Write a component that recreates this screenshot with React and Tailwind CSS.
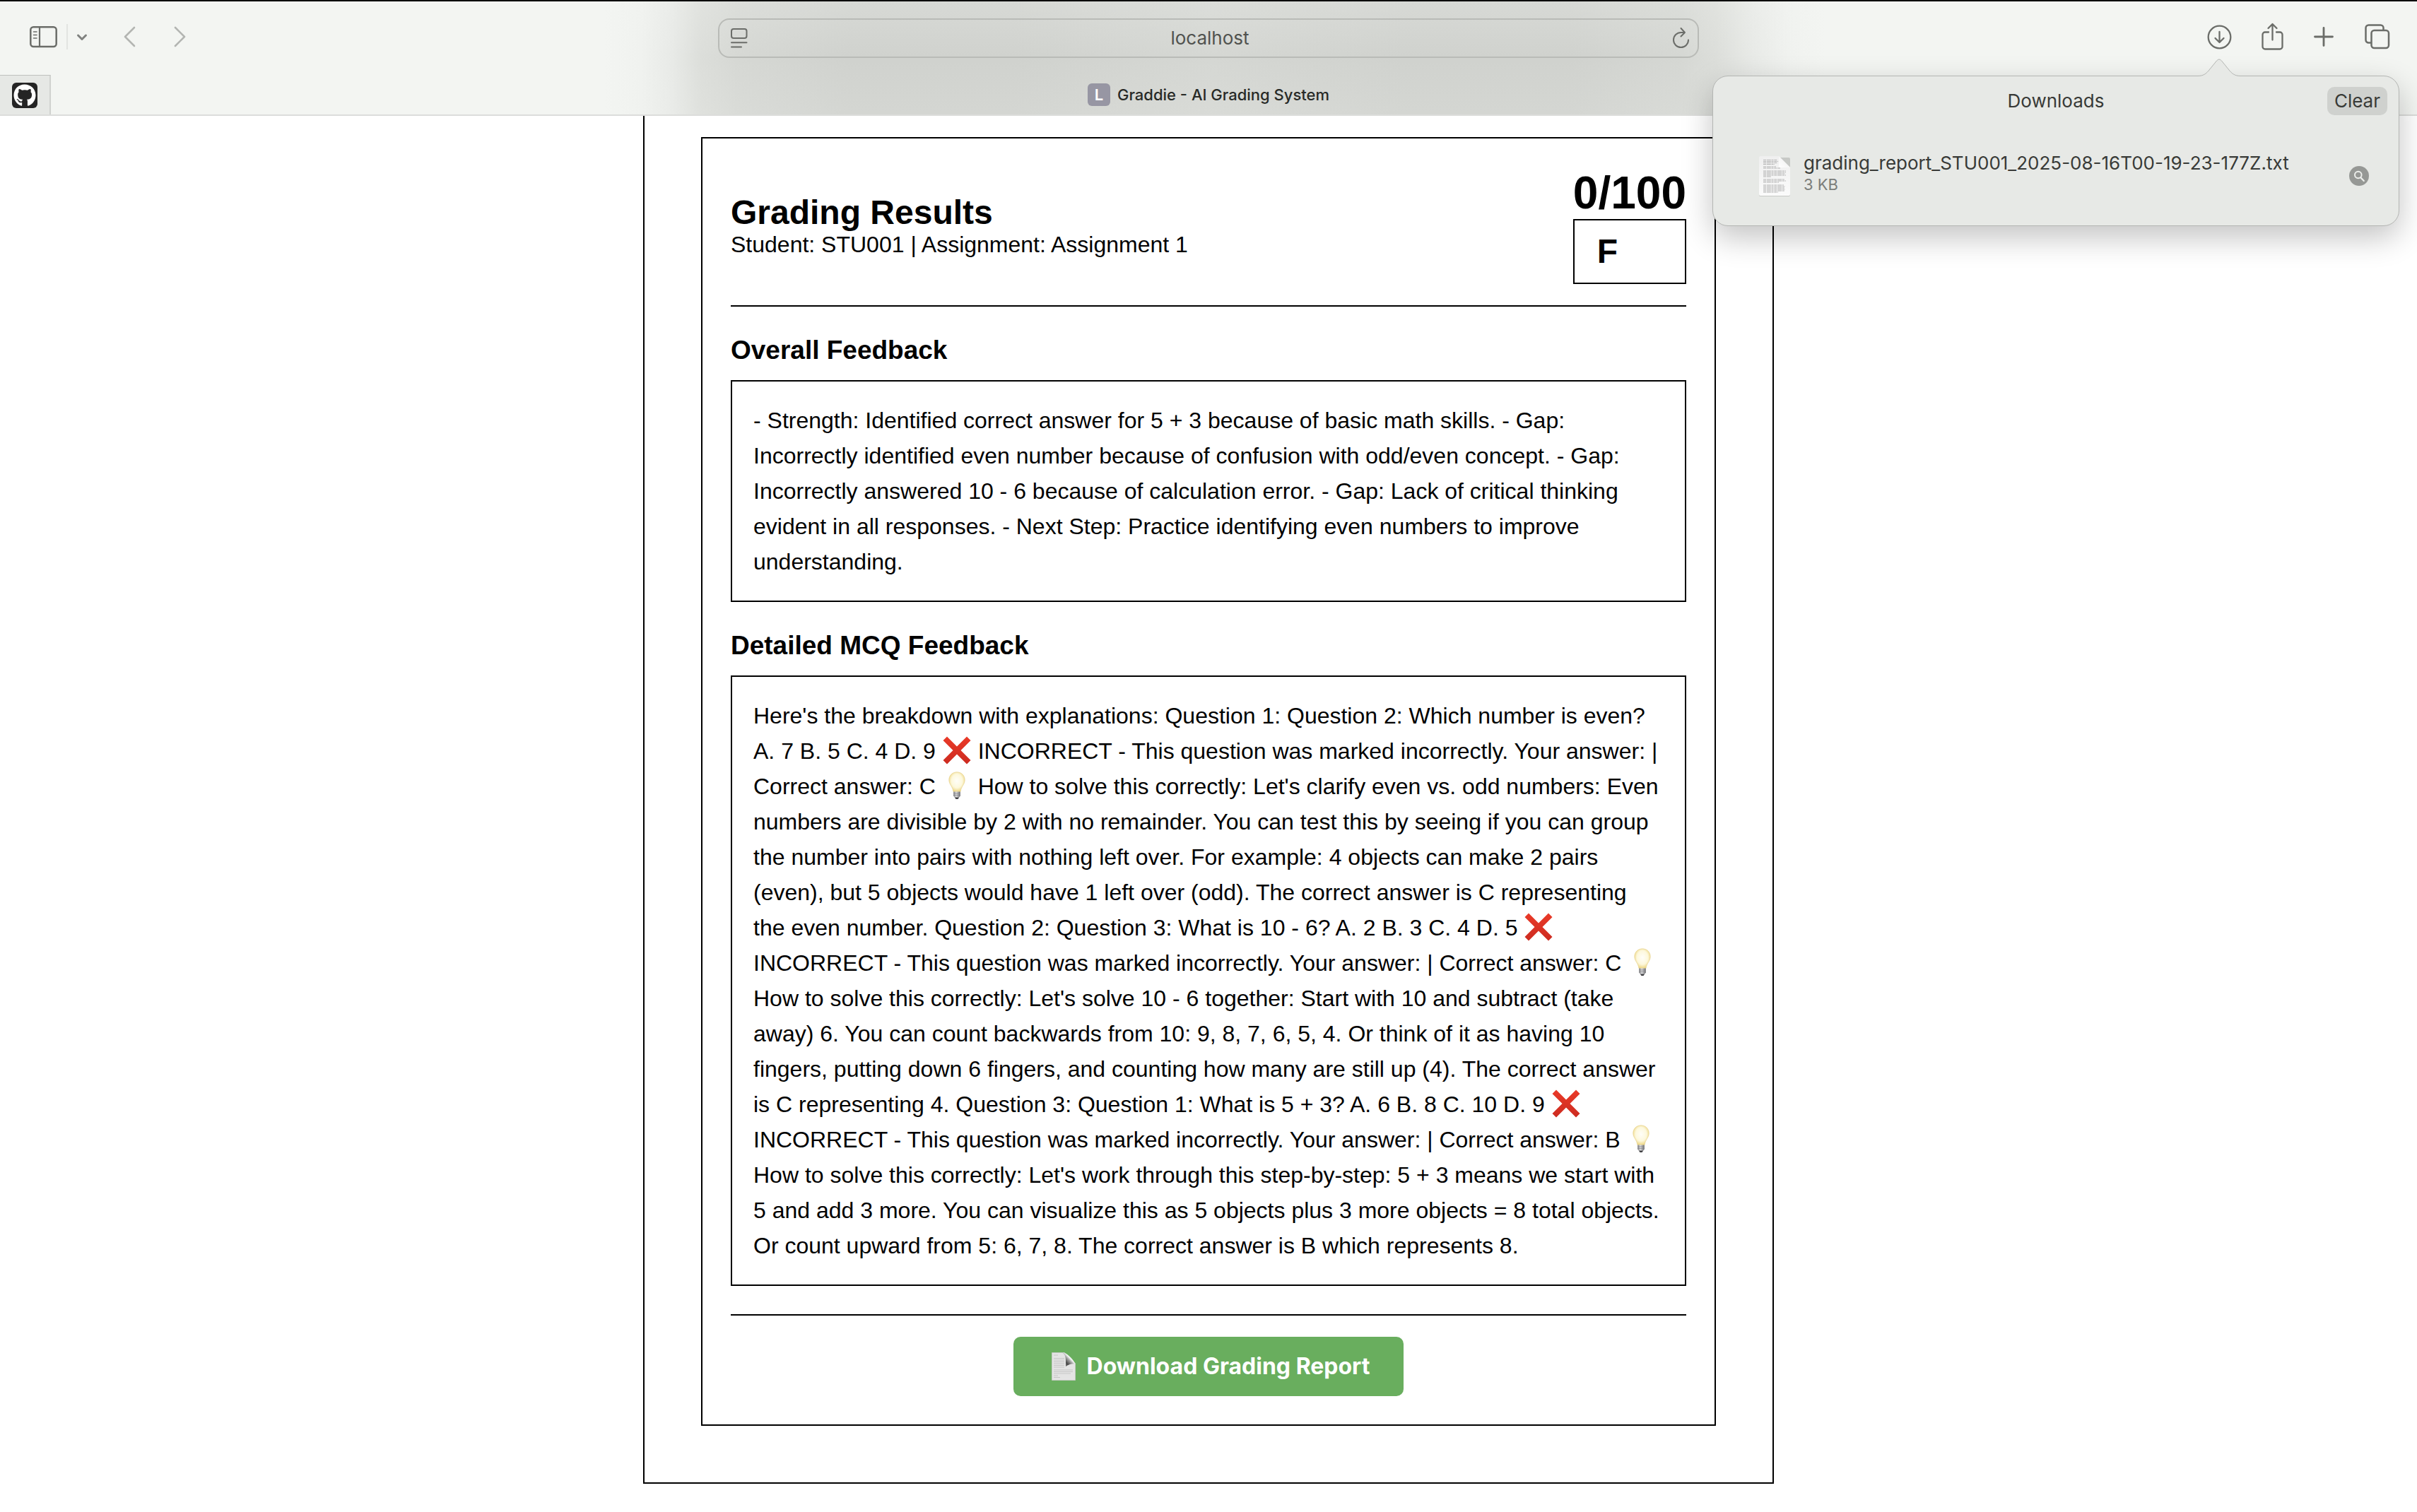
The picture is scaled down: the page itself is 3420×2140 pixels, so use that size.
import React from "react";
import { FaGithub } from "react-icons/fa";

const UI_FONT = "font-['Inter','Liberation_Sans',sans-serif]";
const PAGE_FONT = "font-['Liberation_Sans',Arial,sans-serif]";

function Cross() {
  return (
    <svg role="img" aria-label="Cross mark" viewBox="0 0 40 40" className="mx-px inline-block size-10 align-[-8px]">
      <defs>
        <linearGradient id="crossRed" x1="0" y1="0" x2="0" y2="1">
          <stop offset="0" stopColor="#ea3a28" />
          <stop offset="1" stopColor="#cc2b20" />
        </linearGradient>
      </defs>
      <path
        fill="url(#crossRed)"
        d="M6 .5 20 14.5 34 .5 39.5 6 25.5 20 39.5 34 34 39.5 20 25.5 6 39.5 .5 34 14.5 20 .5 6Z"
      />
    </svg>
  );
}

function Bulb() {
  return (
    <svg role="img" aria-label="Light bulb" viewBox="0 0 40 40" className="mx-px inline-block size-10 align-[-8px]">
      <defs>
        <radialGradient id="bulbGlass" cx="0.5" cy="0.45" r="0.58">
          <stop offset="0" stopColor="#fffef8" />
          <stop offset="0.6" stopColor="#fdf8dc" />
          <stop offset="1" stopColor="#ecd277" />
        </radialGradient>
        <linearGradient id="bulbBase" x1="0" y1="0" x2="1" y2="0">
          <stop offset="0" stopColor="#77777a" />
          <stop offset="0.4" stopColor="#dededf" />
          <stop offset="1" stopColor="#69696c" />
        </linearGradient>
      </defs>
      <path
        fill="url(#bulbGlass)"
        stroke="#e3cd84"
        strokeWidth="0.6"
        d="M20 .8c6.400 0 11.200 4.800 11.200 11 0 6.700-5 8.700-6.200 16.700H15C13.800 20.500 8.800 18.500 8.800 11.800 8.800 5.600 13.600.8 20 .8Z"
      />
      <path fill="url(#bulbBase)" d="M15.200 28.400h9.600v6.200l-1.600 1.800h-6.400l-1.600-1.800Z" />
      <path stroke="#85858a" strokeWidth="0.7" d="M15.200 31h9.600M15.200 33.500h9.600" />
      <path fill="#3f3f42" d="M16.800 36.400h6.400L21.500 39h-3Z" />
    </svg>
  );
}

function PageIcon() {
  return (
    <svg viewBox="0 0 34 48" className="h-12 w-[34px]" aria-hidden="true">
      <defs>
        <linearGradient id="curl" x1="0" y1="1" x2="1" y2="0">
          <stop offset="0" stopColor="#8e8e8e" />
          <stop offset="0.3" stopColor="#4a4a4a" />
          <stop offset="0.5" stopColor="#a8a8a8" />
          <stop offset="0.6" stopColor="#f4f4f4" />
          <stop offset="1" stopColor="#e4e4e4" />
        </linearGradient>
      </defs>
      <path fill="#e4e4e4" stroke="#c9c9c9" strokeWidth="0.8" d="M.5 4.500H18L33.500 20v23.500H.5Z" />
      <path fill="url(#curl)" d="M15 4.500c4.500 2 5.500 7 5 19.500 4-3 9-4.500 13.500-3.500V20C31 15 24 7 18 4.500Z" />
      <path
        stroke="#c6c6c6"
        strokeWidth="1"
        d="M3 8h6M3 12.500h15M3 15h15M3 17.500h15M3 20h15M3 22.500h15M3 25h15M3 29h27M3 31.500h27M3 34h24M3 37h6M3 39.500h9"
      />
    </svg>
  );
}

function TextFileIcon() {
  return (
    <svg viewBox="0 0 46 60" className="h-[60px] w-[46px] shrink-0" aria-hidden="true">
      <defs>
        <linearGradient id="sheet" x1="0" y1="0" x2="0" y2="1">
          <stop offset="0" stopColor="#efefef" />
          <stop offset="1" stopColor="#fbfbfb" />
        </linearGradient>
        <linearGradient id="fold" x1="0" y1="1" x2="1" y2="0">
          <stop offset="0" stopColor="#ffffff" />
          <stop offset="0.5" stopColor="#f6f6f6" />
          <stop offset="1" stopColor="#dcdcdc" />
        </linearGradient>
      </defs>
      <rect x="1" y="4" width="44" height="55" rx="2" fill="#b9bab8" opacity="0.7" />
      <path fill="url(#sheet)" d="M3 2h26l16 16v38a2 2 0 0 1-2 2H3a2 2 0 0 1-2-2V4a2 2 0 0 1 2-2Z" />
      <path
        stroke="#b2b2b2"
        strokeWidth="1.200"
        strokeDasharray="4 0.8 6 0.7 3 0.8"
        d="M7 7.500h20M7 9.500h21M7 11.500h20M7 13.500h16M7 17h18M7 19h24M7 23h32M7 25h32M7 27h31M7 29h32M7 31h11M7 35h30M7 37h32M7 39h22M7 43h29M7 45h31M7 47h30M7 49h31M7 51h30M7 53h21"
      />
      <path fill="url(#fold)" d="M29 2v14a2 2 0 0 0 2 2h14Z" />
    </svg>
  );
}

function Toolbar() {
  return (
    <div className="grid h-[104px] grid-cols-[1fr_minmax(0,1388px)_1fr] items-start text-[#6b6d69]">
      <div className="flex h-[104px] items-center pb-1 pl-[42px]">
        <button aria-label="Show sidebar">
          <svg viewBox="0 0 40 32" className="h-8 w-10" fill="none" stroke="currentColor">
            <rect x="1.300" y="2.300" width="36.400" height="27.800" rx="4" strokeWidth="2.500" />
            <path strokeWidth="2.200" d="M14 2v28" />
            <path strokeWidth="1.500" strokeLinecap="round" d="M5.500 9h4.500M5.500 13.500h4.500M5.500 18h4.500" />
          </svg>
        </button>
        <span className="ml-3 h-9 w-[2px] bg-[#e2e4e1]" />
        <button aria-label="Tab groups" className="ml-3">
          <svg viewBox="0 0 16 16" className="size-4" fill="none" stroke="#808280" strokeWidth="3" strokeLinecap="round" strokeLinejoin="round">
            <path d="M2.500 6 8 11.500 13.500 6" />
          </svg>
        </button>
        <button aria-label="Back" className="ml-[49px]">
          <svg viewBox="0 0 20 32" className="h-8 w-5" fill="none" stroke="#b3b5b2" strokeWidth="2.600" strokeLinecap="round" strokeLinejoin="round">
            <path d="M17 3 4 16 17 29" />
          </svg>
        </button>
        <button aria-label="Forward" className="ml-[52px]">
          <svg viewBox="0 0 20 32" className="h-8 w-5" fill="none" stroke="#b3b5b2" strokeWidth="2.600" strokeLinecap="round" strokeLinejoin="round">
            <path d="M3 3 16 16 3 29" />
          </svg>
        </button>
      </div>

      <div className="mt-6 flex h-14 items-center rounded-2xl border-2 border-[#b9bbb7] pr-3 pl-4">
        <button aria-label="Page menu">
          <svg viewBox="0 0 24 32" className="h-8 w-6" fill="none" stroke="currentColor" strokeWidth="2">
            <rect x="1" y="3" width="21.500" height="13" rx="3" />
            <path strokeLinecap="round" d="M1 22.300h21.500M1 28.500h14" />
          </svg>
        </button>
        <input
          aria-label="Address"
          defaultValue="localhost"
          className="min-w-0 flex-1 bg-transparent text-center text-[26px] leading-8 text-[#50524f] outline-none"
        />
        <button aria-label="Reload">
          <svg viewBox="0 0 24 32" className="h-8 w-6" fill="none" stroke="currentColor" strokeWidth="2" strokeLinecap="round" strokeLinejoin="round">
            <path d="M23 18.500a10.500 10.500 0 1 1-10.500-10.500H18M12.500 2 18 8l-5.500 5.500" />
          </svg>
        </button>
      </div>

      <div className="flex h-[104px] items-center justify-end pr-[38px] pb-1">
        <button aria-label="Show downloads">
          <svg viewBox="0 0 36 40" className="h-10 w-9" fill="none" stroke="currentColor" strokeWidth="2.300" strokeLinecap="round" strokeLinejoin="round">
            <circle cx="17.500" cy="20.500" r="15.800" />
            <path d="M17.500 13v14.500M11.500 22l6 6 6-6" />
          </svg>
        </button>
        <button aria-label="Share" className="ml-[41px]">
          <svg viewBox="0 0 32 40" className="h-10 w-8" fill="none" stroke="currentColor" strokeWidth="2.300" strokeLinecap="round" strokeLinejoin="round">
            <path d="M10 13.500H5A3.500 3.500 0 0 0 1.500 17v17A3.500 3.500 0 0 0 5 37.500h21A3.500 3.500 0 0 0 29.500 34V17a3.500 3.500 0 0 0-3.500-3.500h-5M15.500 24.500V2.500M9.500 8l6-6 6 6" />
          </svg>
        </button>
        <button aria-label="New tab" className="ml-[41px]">
          <svg viewBox="0 0 32 40" className="h-10 w-8" fill="none" stroke="currentColor" strokeWidth="2.800" strokeLinecap="round">
            <path d="M2.500 20h25M15 7.500v25" />
          </svg>
        </button>
        <button aria-label="Tab overview" className="ml-[41px]">
          <svg viewBox="0 0 36 40" className="h-10 w-9" fill="none" stroke="currentColor" strokeWidth="2.500" strokeLinejoin="round">
            <rect x="9.500" y="11" width="24.500" height="25" rx="4" />
            <path d="M9.500 28.500H5.500A4 4 0 0 1 1.500 24.500V7.500A4 4 0 0 1 5.500 3.500h17a4 4 0 0 1 4 4v3.500" />
          </svg>
        </button>
      </div>
    </div>
  );
}

function Downloads() {
  return (
    <section
      aria-label="Downloads"
      className="absolute top-[105px] right-[25px] w-[972px] rounded-[22px] border border-[#b4b6b3] bg-[#e7e9e6] pb-9 text-[#383a37] shadow-[0_16px_44px_rgba(0,0,0,0.24)]"
    >
      <svg viewBox="0 0 60 26" className="absolute -top-[25px] right-[224px] h-[26px] w-[60px]" aria-hidden="true">
        <path fill="#e7e9e6" d="M0 26V24.500C8 24.500 12 21 16 16L26.500 3Q30-1 33.500 3L44 16C48 21 52 24.500 60 24.500V26Z" />
        <path fill="none" stroke="#b4b6b3" d="M0 24.500C8 24.500 12 21 16 16L26.500 3Q30-1 33.500 3L44 16C48 21 52 24.500 60 24.500" />
      </svg>
      <div className="grid grid-cols-[1fr_auto_1fr] items-center px-4 pt-[15px]">
        <h2 className="col-start-2 text-[26px] leading-8">Downloads</h2>
        <button className="h-10 justify-self-end rounded-[10px] bg-[#cfd1ce] px-2.5 text-[26px] leading-8">Clear</button>
      </div>
      <div className="mt-[52px] flex items-center pr-[42px] pl-16">
        <TextFileIcon />
        <div className="ml-[18px] flex-1 pb-2">
          <div className="text-[26px] leading-8">grading_report_STU001_2025-08-16T00-19-23-177Z.txt</div>
          <div className="text-[22px] leading-7 text-[#7b7d7a]">3 KB</div>
        </div>
        <button aria-label="Show in Finder">
          <svg viewBox="0 0 28 28" className="size-7" fill="none">
            <circle cx="14" cy="14" r="14" fill="#969895" />
            <circle cx="12.800" cy="12.500" r="4.800" stroke="#eceeeb" strokeWidth="2" />
            <path d="m16.300 16.200 4.500 4.800" stroke="#eceeeb" strokeWidth="2.200" strokeLinecap="round" />
          </svg>
        </button>
      </div>
    </section>
  );
}

function BrowserChrome() {
  return (
    <header
      className={`${UI_FONT} relative border-t-2 border-b-2 border-t-black border-b-[#dcdddb] bg-[#f3f5f2] bg-[linear-gradient(to_bottom,rgba(243,245,242,0.2),rgba(243,245,242,0)_50%,rgba(243,245,242,0.12)),linear-gradient(to_right,#f3f5f2_25%,#f0f2ef_26.5%,#e8eae7_27.8%,#dcdeda_29%,#d6d8d4_30.5%,#d0d2ce_35%,#d0d2ce_42%,#d5d7d3_50%,#d0d2ce_58%,#d0d2ce_65%,#d5d7d3_69.5%,#dcdeda_71%,#e8eae7_72.5%,#f0f2ef_74%,#f3f5f2_75.5%)]`}
    >
      <Toolbar />
      <nav aria-label="Tabs" className="grid h-14 grid-cols-[72px_1fr_72px]">
        <a
          href="#github"
          aria-label="GitHub"
          className="flex items-center border-t border-r-2 border-t-[#bfc1be] border-r-[#d0d2cf] bg-[#e6e8e5] pl-[17px]"
        >
          <span className="flex size-9 items-center justify-center rounded-md bg-[#242424]">
            <FaGithub className="size-8 text-white" />
          </span>
        </a>
        <a href="#graddie" className="flex items-center justify-center gap-2.5 text-[22px] leading-7 font-medium text-[#282a27]">
          <span className="flex size-8 items-center justify-center rounded-md bg-[#9796a3] text-[22px] font-semibold text-white">L</span>
          Graddie - AI Grading System
        </a>
      </nav>
      <Downloads />
    </header>
  );
}

function FeedbackSection({ title, children }) {
  return (
    <section className="mt-10">
      <h3 className="text-[37px] leading-[43px] font-bold">{title}</h3>
      <p className="mt-[21px] border-2 border-black p-[30px] text-[32px] leading-[50px]">{children}</p>
    </section>
  );
}

export default function App() {
  return (
    <div className="min-h-screen bg-white">
      <BrowserChrome />
      <main className={`${PAGE_FONT} mx-auto w-full max-w-[1600px] border-x-2 border-b-2 border-black px-20 pt-[30px] pb-20 text-black`}>
        <div className="border-2 border-black p-10">
          <div className="flex items-center justify-between border-b-2 border-black pb-[30px]">
            <div>
              <h2 className="text-[48px] leading-[55px] font-bold">Grading Results</h2>
              <p className="text-[32px] leading-[37px]">Student: STU001 | Assignment: Assignment 1</p>
            </div>
            <div className="font-bold">
              <div className="text-[64px] leading-[74px]">0/100</div>
              <div className="border-2 border-black px-8 py-4 text-[48px] leading-[56px]">F</div>
            </div>
          </div>

          <FeedbackSection title="Overall Feedback">
            - Strength: Identified correct answer for 5 + 3 because of basic math skills. - Gap: Incorrectly identified
            even number because of confusion with odd/even concept. - Gap: Incorrectly answered 10 - 6 because of
            calculation error. - Gap: Lack of critical thinking evident in all responses. - Next Step: Practice
            identifying even numbers to improve understanding.
          </FeedbackSection>

          <FeedbackSection title="Detailed MCQ Feedback">
            Here's the breakdown with explanations: Question 1: Question 2: Which number is even? A. 7 B. 5 C. 4 D. 9{" "}
            <Cross /> INCORRECT - This question was marked incorrectly. Your answer: | Correct answer: C <Bulb /> How to
            solve this correctly: Let's clarify even vs. odd numbers: Even numbers are divisible by 2 with no remainder.
            You can test this by seeing if you can group the number into pairs with nothing left over. For example: 4
            objects can make 2 pairs (even), but 5 objects would have 1 left over (odd). The correct answer is C
            representing the even number. Question 2: Question 3: What is 10 - 6? A. 2 B. 3 C. 4 D. 5 <Cross />{" "}
            INCORRECT - This question was marked incorrectly. Your answer: | Correct answer: C <Bulb /> How to solve
            this correctly: Let's solve 10 - 6 together: Start with 10 and subtract (take away) 6. You can count
            backwards from 10: 9, 8, 7, 6, 5, 4. Or think of it as having 10 fingers, putting down 6 fingers, and
            counting how many are still up (4). The correct answer is C representing 4. Question 3: Question 1: What is
            5 + 3? A. 6 B. 8 C. 10 D. 9 <Cross /> INCORRECT - This question was marked incorrectly. Your answer: |
            Correct answer: B <Bulb /> How to solve this correctly: Let's work through this step-by-step: 5 + 3 means we
            start with 5 and add 3 more. You can visualize this as 5 objects plus 3 more objects = 8 total objects. Or
            count upward from 5: 6, 7, 8. The correct answer is B which represents 8.
          </FeedbackSection>

          <div className="mt-10 flex justify-center border-t-2 border-black pt-[30px]">
            <button
              className={`${UI_FONT} flex h-[84px] items-center gap-4 rounded-[10px] bg-[#69ae5e] pr-12 pl-[54px] text-[32px] leading-10 font-bold text-white`}
            >
              <PageIcon />
              Download Grading Report
            </button>
          </div>
        </div>
      </main>
    </div>
  );
}
